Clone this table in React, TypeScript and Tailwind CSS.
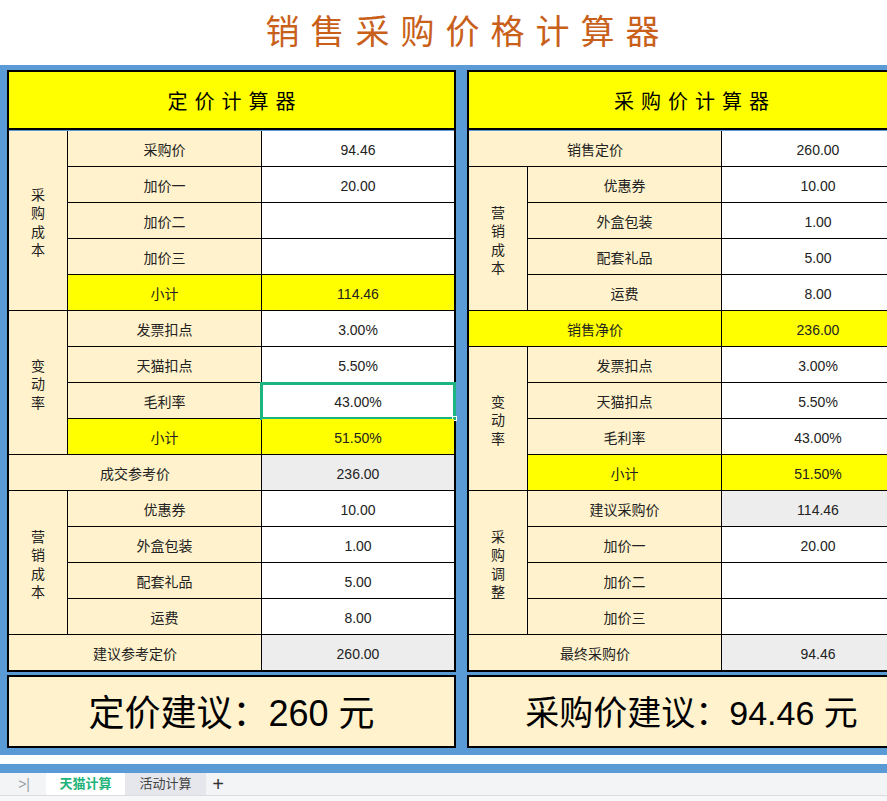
import React from "react";

type Row =
  | { kind: "group"; label: string; rows: Item[] }
  | { kind: "span"; label: string; value: string; tone: "white" | "gray" | "yellow" };

type Item = { label: string; value: string; tone?: "white" | "gray" | "yellow"; selected?: boolean };

const FONT = { fontFamily: '"Liberation Sans", "Noto Sans CJK SC", sans-serif' };

const PRICING: Row[] = [
  {
    kind: "group",
    label: "采购成本",
    rows: [
      { label: "采购价", value: "94.46" },
      { label: "加价一", value: "20.00" },
      { label: "加价二", value: "" },
      { label: "加价三", value: "" },
      { label: "小计", value: "114.46", tone: "yellow" },
    ],
  },
  {
    kind: "group",
    label: "变动率",
    rows: [
      { label: "发票扣点", value: "3.00%" },
      { label: "天猫扣点", value: "5.50%" },
      { label: "毛利率", value: "43.00%", selected: true },
      { label: "小计", value: "51.50%", tone: "yellow" },
    ],
  },
  { kind: "span", label: "成交参考价", value: "236.00", tone: "gray" },
  {
    kind: "group",
    label: "营销成本",
    rows: [
      { label: "优惠券", value: "10.00" },
      { label: "外盒包装", value: "1.00" },
      { label: "配套礼品", value: "5.00" },
      { label: "运费", value: "8.00" },
    ],
  },
  { kind: "span", label: "建议参考定价", value: "260.00", tone: "gray" },
];

const PURCHASE: Row[] = [
  { kind: "span", label: "销售定价", value: "260.00", tone: "white" },
  {
    kind: "group",
    label: "营销成本",
    rows: [
      { label: "优惠券", value: "10.00" },
      { label: "外盒包装", value: "1.00" },
      { label: "配套礼品", value: "5.00" },
      { label: "运费", value: "8.00" },
    ],
  },
  { kind: "span", label: "销售净价", value: "236.00", tone: "yellow" },
  {
    kind: "group",
    label: "变动率",
    rows: [
      { label: "发票扣点", value: "3.00%" },
      { label: "天猫扣点", value: "5.50%" },
      { label: "毛利率", value: "43.00%" },
      { label: "小计", value: "51.50%", tone: "yellow" },
    ],
  },
  {
    kind: "group",
    label: "采购调整",
    rows: [
      { label: "建议采购价", value: "114.46", tone: "gray" },
      { label: "加价一", value: "20.00" },
      { label: "加价二", value: "" },
      { label: "加价三", value: "" },
    ],
  },
  { kind: "span", label: "最终采购价", value: "94.46", tone: "gray" },
];

const toneBg = (tone?: string) =>
  tone === "yellow" ? "bg-[#ffff00]" : tone === "gray" ? "bg-[#ededed]" : "bg-white";

function Calculator({
  title,
  rows,
  result,
  resultSize,
}: {
  title: string;
  rows: Row[];
  result: string;
  resultSize: string;
}) {
  const cells: React.ReactNode[] = [];
  rows.forEach((r, i) => {
    if (r.kind === "span") {
      const labelBg = r.tone === "yellow" ? "bg-[#ffff00]" : "bg-[#fff2cc]";
      cells.push(
        <div key={`s${i}`} className={`col-span-2 flex items-center justify-center pt-[4px] ${labelBg}`}>
          {r.label}
        </div>,
        <div key={`v${i}`} className={`flex items-center justify-center pt-[4px] ${toneBg(r.tone)}`}>
          {r.value}
        </div>
      );
    } else {
      const spans = ["row-span-4", "row-span-5"];
      cells.push(
        <div
          key={`g${i}`}
          className={`${spans[r.rows.length - 4]} flex flex-col items-center justify-center pt-[4px] bg-[#fff2cc] leading-[18.5px]`}
        >
          {r.label.split("").map((c, k) => (
            <span key={k}>{c}</span>
          ))}
        </div>
      );
      r.rows.forEach((it, j) => {
        const yellow = it.tone === "yellow";
        cells.push(
          <div
            key={`l${i}-${j}`}
            className={`flex items-center justify-center pt-[4px] ${yellow ? "bg-[#ffff00]" : "bg-[#fff2cc]"}`}
          >
            {it.label}
          </div>,
          <div key={`v${i}-${j}`} className={`relative flex items-center justify-center pt-[4px] ${toneBg(it.tone)}`}>
            {it.value}
            {it.selected && (
              <>
                <div className="absolute -left-[2px] -top-px -right-[2px] -bottom-[2px] border-[3px] border-[#1db57f]" />
                <div className="absolute -right-[3px] -bottom-[3px] w-[5px] h-[5px] bg-[#1db57f] border border-white" />
              </>
            )}
          </div>
        );
      });
    }
  });

  return (
    <div className="w-[449px] shrink-0">
      <div className="border-2 border-black">
        <div className="h-[58px] bg-[#ffff00] border-b-[2px] border-black flex items-center justify-center pt-[4px] text-[20px] tracking-[7px] pl-[7px] text-black">
          {title}
        </div>
        <div className="grid grid-cols-[58px_193px_192px] auto-rows-[35px] gap-px bg-black text-[14px] text-[#222] mt-px">
          {cells}
        </div>
      </div>
      <div
        className={`mt-[3px] h-[73px] border-2 border-black bg-[#fff2cc] flex items-center justify-center pt-[4px] ${resultSize} text-black`}
      >
        {result}
      </div>
    </div>
  );
}

export default function App() {
  return (
    <div className="w-[887px] h-[801px] overflow-hidden bg-white" style={FONT}>
      <div className="w-[925px]">
        <div className="h-[65px] flex items-center justify-center text-[34px] tracking-[11px] pl-[11px] text-[#c8601a]">
          销售采购价格计算器
        </div>
        <div className="bg-[#5b9bd5] pt-[5px] pb-[7px] pl-[7px] flex gap-[11px]">
          <Calculator title="定价计算器" rows={PRICING} result="定价建议：260 元" resultSize="text-[36px]" />
          <Calculator title="采购价计算器" rows={PURCHASE} result="采购价建议：94.46 元" resultSize="text-[34px]" />
        </div>
        <div className="h-[9px] bg-white" />
        <div className="h-[9px] bg-[#5b9bd5]" />
        <div className="h-[22px] bg-[#f3f4f6] flex items-stretch text-[13px]">
          <div className="w-[46px] flex items-center justify-end pr-[16px] text-[#9aa0a6] text-[14px]">
            <span className="font-light">&gt;|</span>
          </div>
          <div className="w-[79px] bg-white flex items-center justify-center text-[#1fb37a] font-bold">天猫计算</div>
          <div className="w-[81px] bg-[#e6e7ec] flex items-center justify-center text-[#444]">活动计算</div>
          <div className="w-[24px] flex items-center justify-center text-[#333] text-[20px] font-light">+</div>
        </div>
        <div className="h-px bg-[#dadce0]" />
        <div className="h-[5px] bg-[#f7f7f9]" />
      </div>
    </div>
  );
}
